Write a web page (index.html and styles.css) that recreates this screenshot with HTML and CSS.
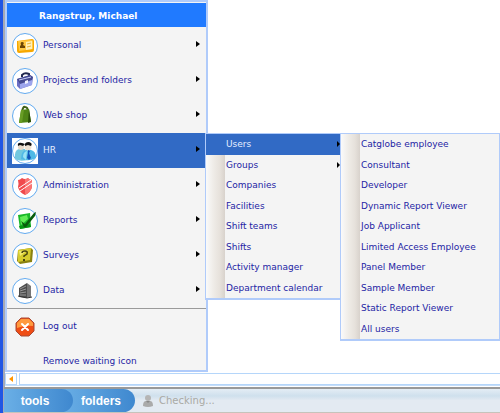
FILE: index.html
```html
<!DOCTYPE html>
<html lang="en">
<head>
<meta charset="utf-8">
<title>Catglobe menu</title>
<link rel="stylesheet" href="styles.css">
</head>
<body>
<div class="window">
  <nav class="menu" aria-label="Tools">
    <h1 class="menu-title">Rangstrup, Michael</h1>
    <ul class="menu-list">
      <li><a class="item" href="#">
        <svg class="icon" viewBox="0 0 28 28"><circle class="ring" cx="14" cy="14" r="12.5"/><path d="M6 9 21 7Q23 7 23 9V18Q23 20 21 20L8 21Q6 21 6 19Z" fill="#f7a800"/><path d="M7 9 21 8Q22 8 22 10V17L8 19Z" fill="#ffc943"/><path d="M15 10 21 9V17L15 18Z" fill="#fff0b8"/><path d="M9 16H14V14L12 13Q14 10 11 10Q9 10 10 13L9 14Z" fill="#6b4505"/><path d="M16 12 20 11M16 15 20 14" stroke="#e9b43b"/></svg>
        <span class="label">Personal</span></a></li>
      <li><a class="item" href="#">
        <svg class="icon" viewBox="0 0 28 28"><circle class="ring" cx="14" cy="14" r="12.5"/><path d="M11 10V8Q14 5 18 7V9" fill="none" stroke="#22284f" stroke-width="2"/><path d="M6 12 19 8 22 10 21 18 9 22 6 19Z" fill="#6b6fc4"/><path d="M9 15 21 11 21 18 9 22Z" fill="#9da5ed"/><path d="M6 12 19 8 22 10 21 13 9 17Z" fill="#454a91"/><path d="M8 13 20 10" stroke="#cbd0f8"/><path d="M14 14 17 13V16L14 17Z" fill="#f2f2ff"/></svg>
        <span class="label">Projects and folders</span></a></li>
      <li><a class="item" href="#">
        <svg class="icon" viewBox="0 0 28 28"><circle class="ring" cx="14" cy="14" r="12.5"/><path d="M11 10Q12 4 14 5Q17 5 17 10" fill="none" stroke="#426218" stroke-width="2"/><path d="M10 8 18 7 20 20 8 21Z" fill="#4f8516"/><path d="M18 7 20 20 17 21Z" fill="#284d08"/><path d="M10 8 8 21H11L13 8Z" fill="#689c25"/></svg>
        <span class="label">Web shop</span></a></li>
      <li class="open"><a class="item" href="#">
        <svg class="icon" viewBox="0 0 28 28"><path d="M1 1H27V27H1Z" fill="#fff"/><circle class="ring" cx="14" cy="14" r="12.5"/><path d="M4 22Q3 13 8 12L14 12 16 23Q9 25 4 22Z" fill="#72c8df"/><circle cx="10" cy="10" r="3" fill="#e6d9c9"/><path d="M7 9Q6 5 11 6L14 7 12 9 9 8Z" fill="#111"/><path d="M10 22Q10 14 15 13H20Q25 14 25 21Q18 25 10 22Z" fill="#50b9e6"/><path d="M12 20Q12 15 16 14L15 23Z" fill="#9be3f5"/><circle cx="17" cy="10" r="3.5" fill="#eee2d2"/><path d="M14 9Q13 5 18 5Q22 6 20 9L17 8Z" fill="#111"/><path d="M17 13 19 14 18 16 20 21 18 23 16 21 17 16Z" fill="#1456b8"/></svg>
        <span class="label">HR</span></a>
        <ul class="submenu submenu-hr">
          <li class="open"><a href="#">Users</a>
            <ul class="submenu submenu-users">
              <li><a href="#">Catglobe employee</a></li>
              <li><a href="#">Consultant</a></li>
              <li><a href="#">Developer</a></li>
              <li><a href="#">Dynamic Report Viewer</a></li>
              <li><a href="#">Job Applicant</a></li>
              <li><a href="#">Limited Access Employee</a></li>
              <li><a href="#">Panel Member</a></li>
              <li><a href="#">Sample Member</a></li>
              <li><a href="#">Static Report Viewer</a></li>
              <li><a href="#">All users</a></li>
            </ul>
          </li>
          <li class="parent"><a href="#">Groups</a></li>
          <li><a href="#">Companies</a></li>
          <li><a href="#">Facilities</a></li>
          <li><a href="#">Shift teams</a></li>
          <li><a href="#">Shifts</a></li>
          <li><a href="#">Activity manager</a></li>
          <li><a href="#">Department calendar</a></li>
        </ul>
      </li>
      <li><a class="item" href="#">
        <svg class="icon" viewBox="0 0 28 28"><circle class="ring" cx="14" cy="14" r="12.5"/><path d="M7 8Q9 8 11 6Q14 8 17 6Q18 8 21 8Q20 12 21 15Q20 20 14 23Q8 20 7 15Q8 12 7 8Z" fill="#f04a4d"/><path d="M14 7Q17 7 17 6Q18 8 21 8Q20 12 21 15Q20 20 14 23Z" fill="#fa7473"/><path d="M8 16 20 8M9 19 21 11" stroke="#fff"/></svg>
        <span class="label">Administration</span></a></li>
      <li><a class="item" href="#">
        <svg class="icon" viewBox="0 0 28 28"><circle class="ring" cx="14" cy="14" r="12.5"/><path d="M7 8 19 6 20 20 9 22Z" fill="#19b82a"/><path d="M9 10 16 8 17 12 10 18Z" fill="#63ed58"/><path d="M8 19 19 17 20 20 9 22Z" fill="#079315"/><path d="M10 14 14 17 23 6 25 5 24 9 15 20H13Z" fill="#085d0c"/></svg>
        <span class="label">Reports</span></a></li>
      <li><a class="item" href="#">
        <svg class="icon" viewBox="0 0 28 28"><circle class="ring" cx="14" cy="14" r="12.5"/><path d="M7 8 20 6 22 8 21 20 9 22 6 19Z" fill="#8a8210"/><path d="M7 8 20 6 19 18 7 20Z" fill="#d6cb2d"/><path d="M8 9 17 8 9 14Z" fill="#f1e96d"/><path d="M11 11Q11 9 14 9Q17 9 16 12L13 14V15" fill="none" stroke="#4a4710" stroke-width="1.5"/><path d="M12 17H14V19H12Z" fill="#4a4710"/></svg>
        <span class="label">Surveys</span></a></li>
      <li><a class="item" href="#">
        <svg class="icon" viewBox="0 0 28 28"><circle class="ring" cx="14" cy="14" r="12.5"/><path d="M8 11 16 6V21L8 20Z" fill="#4d4d4d"/><path d="M16 6 20 9V20L16 21Z" fill="#777"/><path d="M9 12 15 9M9 14 15 12M9 16 15 15M9 18H15" stroke="#999"/><path d="M7 19 16 21 21 20" fill="none" stroke="#333"/></svg>
        <span class="label">Data</span></a></li>
    </ul>
    <ul class="menu-list menu-actions">
      <li><a class="item" href="#">
        <svg class="icon" viewBox="0 0 28 28"><path d="M10 5H18L23 10V18L18 23H10L5 18V10Z" fill="#ef4d15" stroke="#a84a35"/><path d="M10 6H18L22 10V13Q14 12 6 15V10Z" fill="#ff9a3e"/><path d="M11 11 17 17M17 11 11 17" stroke="#fff" stroke-width="2" stroke-linecap="round"/></svg>
        <span class="label">Log out</span></a></li>
      <li><a class="item item-plain" href="#"><span class="label">Remove waiting icon</span></a></li>
    </ul>
  </nav>
  <div class="scrollbar">
    <button class="scroll-left" aria-label="Scroll left"><svg viewBox="0 0 4 6"><path d="M4 0V6L0 3Z" fill="#ff9500"/></svg></button>
    <div class="track"></div>
  </div>
  <footer class="taskbar">
    <button class="tab tab-tools">tools</button>
    <button class="tab tab-folders">folders</button>
    <div class="status">
      <svg class="person" viewBox="0 0 10 12"><path d="M0 11Q0 6 3 6H7Q10 6 10 11Q5 13 0 11Z" fill="#aaa"/><circle cx="5" cy="3" r="3" fill="#b5b5b5"/><path d="M3 6 5 8 7 6Z" fill="#888"/></svg>
      <span>Checking...</span>
    </div>
  </footer>
</div>
</body>
</html>
```
FILE: styles.css
```css
* { box-sizing: border-box; }

body {
  margin: 0;
  background: #fff;
  font-family: "DejaVu Sans", sans-serif;
  font-size: 9px;
  color: #1e1ea4;
}

ul { list-style: none; margin: 0; padding: 0; }
a { color: inherit; text-decoration: none; }
button { border: 0; padding: 0; font: inherit; }

.window {
  min-height: 100vh;
  display: flex;
  flex-direction: column;
  border-left: 3px solid #2156e4;
  box-shadow: inset 2px 0 #a5a9b6;
  padding-left: 2px;
}

.menu {
  width: 203px;
  border: 2px solid #b0cbfa;
  background: #f4f4f4;
}

.menu-title {
  margin: 1px 0;
  padding: 6px 0 4px 32px;
  background: #207aff;
  color: #fff;
  font-size: 9px;
  line-height: 14px;
}

.menu-list > li { position: relative; }

.item {
  display: flex;
  align-items: center;
  gap: 4px;
  height: 35px;
  padding: 0 6px 0 4px;
}

.item-plain {
  height: 26px;
  padding: 9px 6px 0 36px;
}

.icon { width: 28px; height: 28px; flex: none; }
.ring { fill: #fff; stroke: #62aaf0; }
.label { padding-bottom: 2px; }

.menu-list:not(.menu-actions) .item::after {
  content: "";
  margin: 0 0 3px auto;
  border: 3px solid transparent;
  border-left: 4px solid #000;
  border-right: 0;
}

.menu-list > .open > .item {
  margin-right: 1px;
  padding-right: 5px;
  background: #316ac5;
  color: #e4edff;
}

.menu-actions { border-top: 1px solid #9a9a9a; }

.submenu {
  position: absolute;
  display: grid;
  grid-auto-rows: 1fr;
  border: 1px solid #b0cbfa;
  box-shadow: 0 1px #b0cbfa;
  background: linear-gradient(to right, #fafafa, #eeebe6 8px, #e6e1db 14px, #d8d2cc 19px) 0 0 / 19px 100% no-repeat #f4f4f4;
  color: #1e1ea4;
}

.submenu-hr { left: 198px; top: 0; width: 136px; height: 166px; }
.submenu-users { left: 134px; top: -1px; width: 160px; height: 207px; }

.submenu > li { display: flex; align-items: center; padding-left: 20px; }
.submenu > .open { background: #316ac5; }
.submenu > .open > a { color: #e4edff; }

.submenu > .open::after,
.submenu > .parent::after {
  content: "";
  margin-left: auto;
  border: 3px solid transparent;
  border-left: 3px solid #000;
  border-right: 0;
}

.scrollbar {
  display: flex;
  gap: 2px;
  margin-top: 1px;
  border-bottom: 1px solid #c5defa;
}

.scroll-left {
  display: flex;
  align-items: center;
  justify-content: center;
  width: 12px;
  height: 12px;
  border: 1px solid #b5d6fa;
  background: #fff;
}

.scroll-left svg { width: 4px; height: 6px; }

.track { flex: 1; border: 1px solid #b5d6fa; border-right: 0; }

.taskbar {
  display: flex;
  height: 26px;
  margin: 1px 0 0 -1px;
  border-top: 2px solid #999;
  border-bottom: 1px solid #c6c3bb;
  background: linear-gradient(#e4edf5, #cfe0ed 30%, #e3eaf2 50%, #e3eaf2);
}

.tab {
  color: #fff;
  font: bold 12px "Liberation Sans", sans-serif;
  background: linear-gradient(to right, #6aafe6, #3f88cf);
  border-radius: 0 12px 12px 0;
}

.tab-tools { position: relative; z-index: 1; width: 69px; padding-right: 7px; }
.tab-folders { width: 74px; margin-left: -12px; padding-left: 6px; }

.status { display: flex; align-items: center; gap: 6px; padding-left: 8px; color: #a9a9a4; font-size: 10px; }
.person { width: 10px; height: 12px; }
```
